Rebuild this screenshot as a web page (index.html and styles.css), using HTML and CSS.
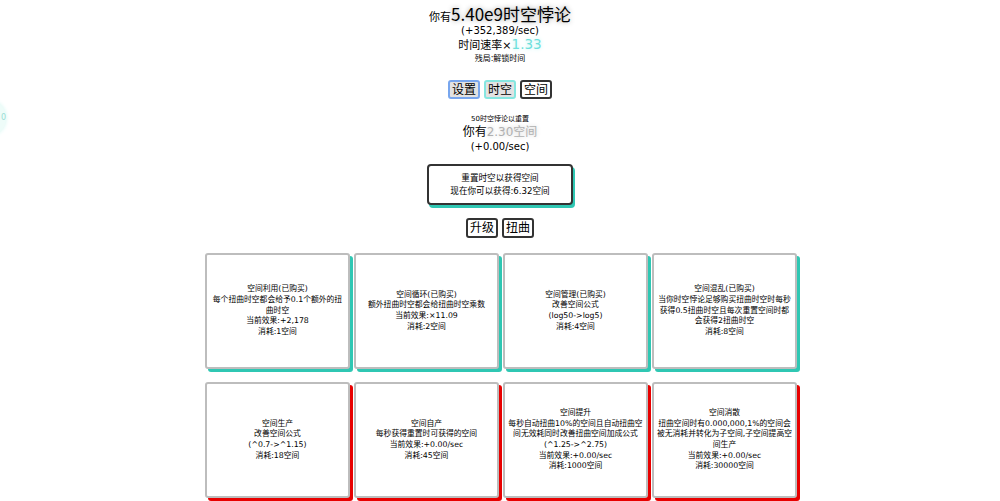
FILE: index.html
```html
<!DOCTYPE html>
<html lang="zh">
<head>
<meta charset="utf-8">
<title>时空悖论</title>
<link rel="stylesheet" href="styles.css">
</head>
<body>
<div class="edge-orb">0</div>
<main class="page">
  <header class="stats">
    <div class="title-line">你有<span class="big">5.40e9时空悖论</span></div>
    <div class="rate">(+352,389/sec)</div>
    <div class="speed">时间速率×<span class="teal">1.33</span></div>
    <div class="endgame">残局:解锁时间</div>
  </header>

  <nav class="tabs">
    <button class="tab tab-blue">设置</button>
    <button class="tab tab-teal">时空</button>
    <button class="tab tab-dark">空间</button>
  </nav>

  <section class="space">
    <div class="req">50时空悖论以重置</div>
    <div class="have">你有<span class="gray">2.30空间</span></div>
    <div class="rate">(+0.00/sec)</div>
    <button class="reset">重置时空以获得空间<br>现在你可以获得:6.32空间</button>
    <div class="subtabs">
      <button class="tab tab-dark">升级</button>
      <button class="tab tab-dark">扭曲</button>
    </div>
  </section>

  <section class="grid">
    <div class="card bought"><div>空间利用(已购买)<br>每个扭曲时空都会给予0.1个额外的扭<br>曲时空<br>当前效果:+2,178<br>消耗:1空间</div></div>
    <div class="card bought"><div>空间循环(已购买)<br>额外扭曲时空都会给扭曲时空乘数<br>当前效果:×11.09<br>消耗:2空间</div></div>
    <div class="card bought"><div>空间管理(已购买)<br>改善空间公式<br>(log50-&gt;log5)<br>消耗:4空间</div></div>
    <div class="card bought"><div>空间混乱(已购买)<br>当你时空悖论足够购买扭曲时空时每秒<br>获得0.5扭曲时空且每次重置空间时都<br>会获得2扭曲时空<br>消耗:8空间</div></div>
    <div class="card locked"><div>空间生产<br>改善空间公式<br>(^0.7-&gt;^1.15)<br>消耗:18空间</div></div>
    <div class="card locked"><div>空间自产<br>每秒获得重置时可获得的空间<br>当前效果:+0.00/sec<br>消耗:45空间</div></div>
    <div class="card locked"><div>空间提升<br>每秒自动扭曲10%的空间且自动扭曲空<br>间无效耗同时改善扭曲空间加成公式<br>(^1.25-&gt;^2.75)<br>当前效果:+0.00/sec<br>消耗:1000空间</div></div>
    <div class="card locked"><div>空间消散<br>扭曲空间时有0.000,000,1%的空间会<br>被无消耗并转化为子空间,子空间提高空<br>间生产<br>当前效果:+0.00/sec<br>消耗:30000空间</div></div>
  </section>
</main>
</body>
</html>
```
FILE: styles.css
```css
html, body {
  margin: 0;
  padding: 0;
  background: #fff;
}
body {
  font-family: "DejaVu Sans", "Noto Sans CJK SC", sans-serif;
  color: #000;
  overflow: hidden;
  height: 501px;
}
.page {
  display: flex;
  flex-direction: column;
  align-items: center;
  padding-top: 5px;
}
.stats {
  text-align: center;
  display: flex;
  flex-direction: column;
  align-items: center;
}
.title-line {
  font-size: 11px;
  line-height: 20px;
  height: 20px;
}
.big {
  font-family: "Noto Sans CJK SC", sans-serif;
  font-size: 17px;
  line-height: 1;
  text-shadow: 0 0 5px #999;
}
.rate {
  font-size: 10px;
  line-height: 12px;
  height: 12px;
}
.speed {
  font-size: 11px;
  line-height: 17px;
  height: 17px;
}
.teal {
  color: #6ee0dc;
  font-size: 13.5px;
  line-height: 1;
  text-shadow: 0 0 4px #bdf3f0;
}
.endgame {
  font-size: 8px;
  line-height: 10px;
  height: 10px;
}
.tabs {
  display: flex;
  gap: 4px;
  margin-top: 16px;
}
.tab {
  font-family: "DejaVu Sans", "Noto Sans CJK SC", sans-serif;
  font-size: 12px;
  line-height: 14px;
  padding: 0 2px;
  border: 2px solid #222;
  border-radius: 3px;
  background: #fff;
  color: #000;
  height: 19px;
  cursor: pointer;
}
.tab-blue {
  background: #e2e2e2;
  border-color: #78a6ee;
}
.tab-teal {
  background: #e2e2e2;
  border-color: #86e6e0;
}
.tab-dark {
  border-color: #333;
}
.space {
  display: flex;
  flex-direction: column;
  align-items: center;
  margin-top: 15px;
  text-align: center;
}
.req {
  font-size: 7px;
  line-height: 10px;
  height: 10px;
}
.have {
  font-size: 12px;
  line-height: 16px;
  height: 16px;
}
.space .rate {
  line-height: 14px;
  height: 14px;
}
.gray {
  color: #b0b0b0;
  text-shadow: 0 0 4px #ccc;
}
.reset {
  margin-top: 10px;
  width: 146px;
  height: 41px;
  border: 2px solid #333;
  border-radius: 4px;
  background: #fff;
  box-shadow: 2px 3px 0 #2fc7b3;
  font-family: "DejaVu Sans", "Noto Sans CJK SC", sans-serif;
  font-size: 8.6px;
  line-height: 13px;
  color: #000;
  padding: 0;
}
.subtabs {
  display: flex;
  gap: 4px;
  margin-top: 13px;
}
.subtabs .tab {
  height: 20px;
}
.grid {
  display: grid;
  grid-template-columns: repeat(4, 145px);
  column-gap: 4px;
  row-gap: 13px;
  margin-top: 15px;
  margin-left: 2px;
}
.card {
  box-sizing: border-box;
  height: 116px;
  border: 2px solid #bdbdbd;
  border-radius: 3px;
  background: #fff;
  display: flex;
  align-items: center;
  justify-content: center;
  text-align: center;
  font-size: 7.8px;
  line-height: 10.7px;
  padding: 0 2px;
  white-space: nowrap;
}
.card.bought {
  box-shadow: 3px 3px 0 #2fc7b3;
}
.card.locked {
  box-shadow: 3px 3px 0 #e80000;
}
.edge-orb {
  position: absolute;
  left: -24px;
  top: 101px;
  width: 30px;
  height: 34px;
  border-radius: 50%;
  background: #eefcf9;
  box-shadow: 0 0 4px #d4f7f1;
  color: #9adcd4;
  font-size: 8px;
  line-height: 34px;
  text-align: right;
}
```
